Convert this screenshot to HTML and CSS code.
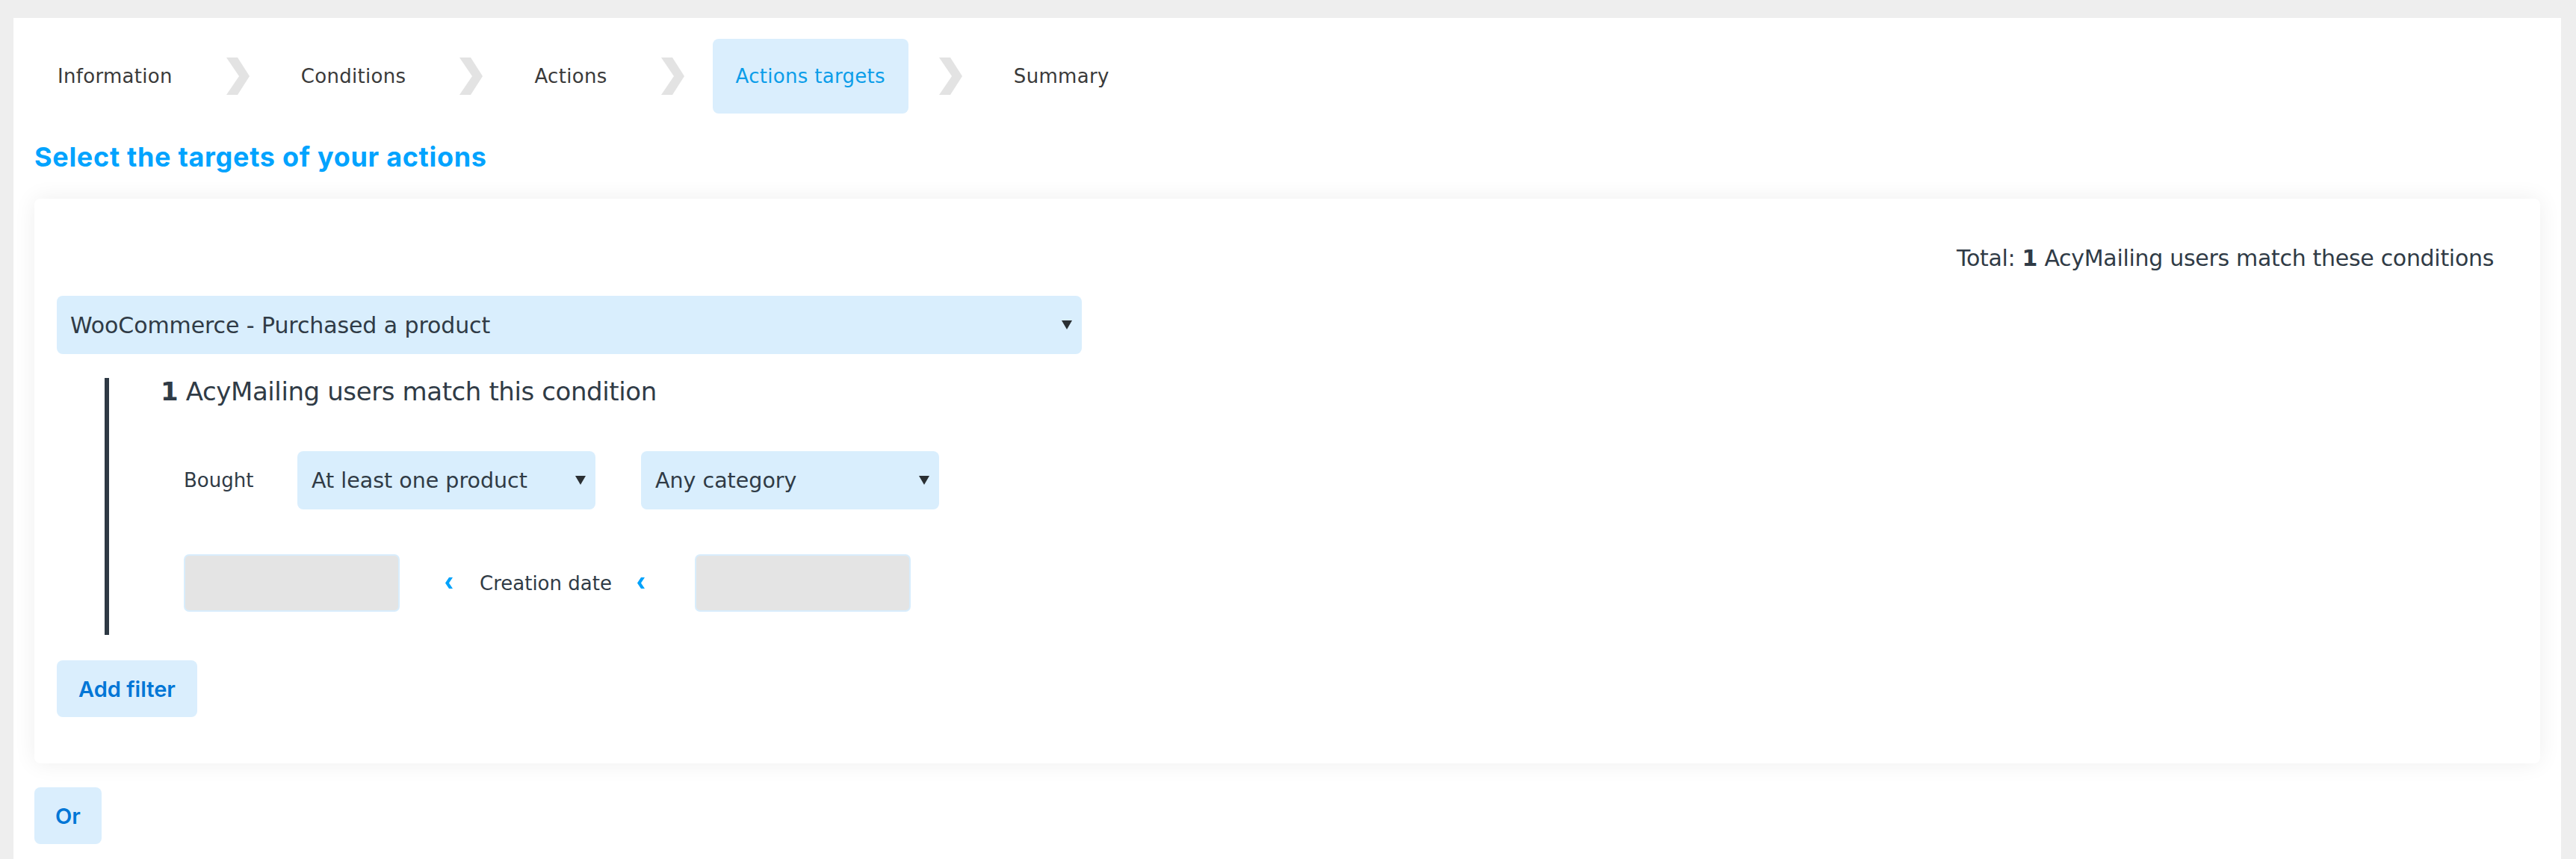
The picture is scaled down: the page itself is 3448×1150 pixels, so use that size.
FILE: index.html
```html
<!DOCTYPE html>
<html lang="en">
<head>
<meta charset="utf-8">
<title>Actions targets</title>
<link rel="stylesheet" href="styles.css">
</head>
<body>
<div class="page">
  <nav class="steps">
    <div class="step">Information</div>
    <div class="sep"><svg width="31" height="50" viewBox="0 0 31 50"><polygon points="0,0 15,0 31,25 15,50 0,50 17,25"/></svg></div>
    <div class="step">Conditions</div>
    <div class="sep"><svg width="31" height="50" viewBox="0 0 31 50"><polygon points="0,0 15,0 31,25 15,50 0,50 17,25"/></svg></div>
    <div class="step">Actions</div>
    <div class="sep"><svg width="31" height="50" viewBox="0 0 31 50"><polygon points="0,0 15,0 31,25 15,50 0,50 17,25"/></svg></div>
    <div class="step active">Actions targets</div>
    <div class="sep"><svg width="31" height="50" viewBox="0 0 31 50"><polygon points="0,0 15,0 31,25 15,50 0,50 17,25"/></svg></div>
    <div class="step">Summary</div>
  </nav>
  <h2 class="title">Select the targets of your actions</h2>
  <section class="card">
    <div class="total">Total: <b>1</b> AcyMailing users match these conditions</div>
    <div class="select select-wide"><span>WooCommerce - Purchased a product</span><svg class="caret" width="14" height="12" viewBox="0 0 14 12"><polygon points="0,0 14,0 7,12"/></svg></div>
    <div class="condition">
      <div class="count"><b>1</b> AcyMailing users match this condition</div>
      <div class="row">
        <span class="label">Bought</span>
        <div class="select select-sm"><span>At least one product</span><svg class="caret" width="14" height="12" viewBox="0 0 14 12"><polygon points="0,0 14,0 7,12"/></svg></div>
        <div class="select select-sm"><span>Any category</span><svg class="caret" width="14" height="12" viewBox="0 0 14 12"><polygon points="0,0 14,0 7,12"/></svg></div>
      </div>
      <div class="row dates">
        <div class="date-input"></div>
        <svg class="lt lt-before" width="10" height="15" viewBox="0 0 10 15"><polygon points="10,0 5,0 0,7.5 5,15 10,15 5,7.5"/></svg>
        <span class="date-label">Creation date</span>
        <svg class="lt lt-after" width="10" height="15" viewBox="0 0 10 15"><polygon points="10,0 5,0 0,7.5 5,15 10,15 5,7.5"/></svg>
        <div class="date-input"></div>
      </div>
    </div>
    <button class="btn">Add filter</button>
  </section>
  <button class="btn btn-or">Or</button>
</div>
</body>
</html>
```

FILE: styles.css
```css
* { box-sizing: border-box; }
html, body { margin: 0; }
body {
  background: #eeeeee;
  font-family: "DejaVu Sans", Inter, sans-serif;
  color: #303b46;
}
.page {
  margin: 24px 20px 0 18px;
  background: #ffffff;
  padding: 28px 28px 40px;
  min-height: 1200px;
}
.steps { display: flex; align-items: center; height: 100px; }
.step {
  height: 100px;
  display: flex;
  align-items: center;
  padding: 0 31px;
  font-size: 26px;
  letter-spacing: 0.3px;
  color: #3a3a3a;
  border-radius: 8px;
}
.step.active { background: #daeefd; color: #0b9de9; }
.sep { width: 110px; padding-left: 41px; display: flex; align-items: center; }
.sep polygon { fill: #e3e3e3; }
.title {
  margin: 31px 0 0;
  font-family: Inter, "DejaVu Sans", sans-serif;
  font-size: 36px;
  font-weight: 700;
  letter-spacing: 0.7px;
  line-height: 54px;
  color: #00a3fe;
}
.card {
  margin-top: 29px;
  background: #ffffff;
  border-radius: 8px;
  box-shadow: 0 0 30px rgba(0, 0, 0, 0.07);
  padding: 57px 62px 62px 30px;
}
.total { text-align: right; font-size: 30px; line-height: 45px; letter-spacing: -0.3px; }
.total b, .count b { font-weight: 700; }
.select {
  display: flex;
  align-items: center;
  justify-content: space-between;
  background: #d9eefd;
  border-radius: 8px;
  color: #303b46;
}
.caret polygon { fill: #2a2f33; }
.select-wide { margin-top: 28px; width: 1372px; height: 78px; padding: 0 13px 0 18px; font-size: 30px; letter-spacing: -0.1px; }
.condition { margin: 32px 0 0 64px; border-left: 6px solid #2e3944; padding: 0 0 31px 69px; }
.count { font-size: 34px; line-height: 36px; letter-spacing: -0.4px; }
.row { display: flex; align-items: center; margin-left: 31px; }
.count + .row { margin-top: 62px; }
.label { width: 152px; font-size: 26px; }
.select-sm { width: 399px; height: 78px; padding: 0 13px 0 19px; font-size: 28.5px; margin-right: 61px; }
.dates { margin-top: 60px; height: 77px; }
.date-input {
  width: 289px;
  height: 77px;
  background: #e4e4e4;
  border: 2px solid #d8edfc;
  border-radius: 7px;
}
.lt polygon { fill: #00a2fb; }
.lt-before { margin: 0 36px 0 61px; }
.lt-after { margin: 0 67px 0 34px; }
.date-label { font-size: 26px; }
.btn {
  display: block;
  margin-top: 34px;
  height: 76px;
  padding: 0 29px;
  border: 0;
  border-radius: 8px;
  background: #daeefd;
  color: #0076d6;
  font-family: Inter, "DejaVu Sans", sans-serif;
  font-size: 29px;
  font-weight: 600;
}
.btn-or { margin-top: 32px; padding: 0 28px; }
```
